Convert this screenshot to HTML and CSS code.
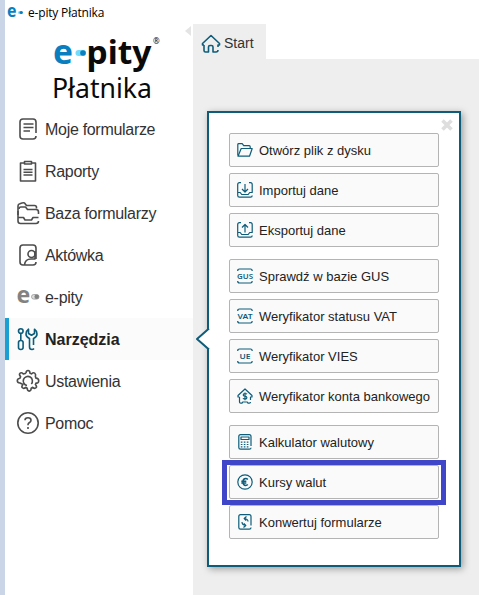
FILE: index.html
```html
<!DOCTYPE html>
<html lang="pl">
  <head>
    <meta charset="UTF-8" />
    <meta name="viewport" content="width=device-width, initial-scale=1.0" />
    <title>e-pity Płatnika</title>
    <link rel="stylesheet" href="styles.css">
  </head>

  <body>
    <div class="window">
      <header class="titlebar">
        <svg class="title-icon" width="17" height="16" viewBox="0 0 17 16">
          <text class="brand-e" x="0" y="13" font-size="18" textLength="9.500" lengthAdjust="spacingAndGlyphs">e</text>
          <rect x="11" y="7" width="5" height="3" rx="1.500" fill="#7fd8f7" />
          <circle cx="14.200" cy="8.500" r="1.600" fill="#0a7fc0" />
        </svg>
        <span class="title-text">e-pity Płatnika</span>
      </header>

      <aside class="sidebar">
        <i class="collapse"></i>
        <svg class="logo" width="110" height="70" viewBox="0 0 110 70">
          <text class="brand-e" x="0" y="32" font-size="34" textLength="20" lengthAdjust="spacingAndGlyphs">e</text>
          <rect x="22.500" y="18" width="10.500" height="6" rx="3" fill="#74dcfb" />
          <circle cx="30" cy="21" r="2.800" fill="#0a7fc0" />
          <text class="brand-name" x="33.500" y="32" font-size="33" textLength="65" lengthAdjust="spacingAndGlyphs">pity</text>
          <text class="brand-reg" x="100" y="12" font-size="8">®</text>
          <text class="brand-sub" x="-1" y="66" font-size="26.500" textLength="100" lengthAdjust="spacingAndGlyphs">Płatnika</text>
        </svg>

        <nav class="menu">
          <a class="item">
            <svg width="24" height="24" viewBox="0 0 24 24">
              <path d="M20 16V5q0-3-3-3H7Q4 2 4 5v14q0 3 3 3h10q3 0 3-3" />
              <path d="M7.500 7h10M7.500 10.500h10M7.500 14h6.500" />
            </svg>
            Moje formularze
          </a>
          <a class="item">
            <svg width="24" height="24" viewBox="0 0 24 24">
              <path d="M8 4H4.500v18h15V4H16" />
              <path d="M8.500 2.500h7v2.500h-7z" />
              <path d="M7.500 10.500h9M7.500 13.200h9M7.500 16h9" />
            </svg>
            Raporty
          </a>
          <a class="item">
            <svg width="24" height="24" viewBox="0 0 24 24">
              <path d="M2 14V5q0-2 1.800-2.300Q7 1.500 8.500 1.900L10.500 4.500h8q2 0 2 2v1" />
              <path d="M3 8q0-2 2-2h4.500L11.500 8.500H20q2.500 0 2.500 2.500v2" />
              <path d="M2 10v10q0 2.500 2.500 2.500h15.500q2.500 0 2.500-2.500M2 16.500h5.500l1.500 2.500h6.500l1.500-2.500h5.500" />
            </svg>
            Baza formularzy
          </a>
          <a class="item">
            <svg width="24" height="24" viewBox="0 0 24 24">
              <path d="M20 16V5q0-3-3-3H7Q4 2 4 5v14q0 3 3 3h10q3 0 3-3" />
              <circle cx="15.500" cy="11" r="3.500" />
              <path d="M19 8v8h-4q-6 0-6.500 6" />
            </svg>
            Aktówka
          </a>
          <a class="item">
            <svg width="24" height="24" viewBox="0 0 24 24">
              <text class="grey-e" x=".500" y="18" font-size="23" textLength="13.500" lengthAdjust="spacingAndGlyphs">e</text>
              <rect class="grey-pill" x="15.500" y="9.500" width="7.500" height="4.600" rx="2.300" />
              <circle class="grey-dot" cx="20.700" cy="11.800" r="2.300" />
            </svg>
            e-pity
          </a>
          <a class="item active">
            <svg width="24" height="24" viewBox="0 0 24 24">
              <circle cx="4.800" cy="4" r="2.300" />
              <path d="M4.800 6.500v7M2.500 15.500q0-2 2.300-2t2.300 2v5q0 2-2.300 2t-2.300-2z" />
              <path d="M18 21.500q-.8 1-2 1-2.500 0-2.500-2.500v-8.500Q10 10 10 7q0-3 2.500-4.800V6.500l3 1.700 3-1.700V2.200Q21 4 21 7q0 3-3.500 4.500V18" />
            </svg>
            Narzędzia
          </a>
          <a class="item">
            <svg width="24" height="24" viewBox="0 0 24 24">
              <path d="M10 4.200Q10 1.500 12 1.500t2 2.700l1.500.7q2-1.900 3.300-.6t.6 3.300l.6 1.500q2.700 0 2.700 2.700t-2.700 2.200l-.6 1.500q1.900 2 .6 3.300t-3.300-.5l-1.500.8q0 3-2 3t-2-3l-1.500-.8q-2 1.800-3.300.5t.6-3.300L4 14Q1.300 14 1.300 11.800T4 9.200l.6-1.600Q2.700 5.600 4 4.300t3.300.6L10 4.200" />
              <path d="M11 16.500A4.600 4.600 0 1 1 15.300 15" />
            </svg>
            Ustawienia
          </a>
          <a class="item">
            <svg width="24" height="24" viewBox="0 0 24 24">
              <circle cx="12" cy="12" r="10.200" />
              <path d="M9 9.200Q9 6.700 12 6.700t3 2.500q0 1.400-1.500 2.300T12 13.800v.5M12 16v2" />
            </svg>
            Pomoc
          </a>
        </nav>
      </aside>

      <main class="content">
        <div class="tab">
          <svg width="20" height="20" viewBox="0 0 20 20">
            <path d="M3 11H1.500v-1.500L10 1.500l8.500 8V11H17v2M3 11v5.500Q3 18 4.500 18h3v-5q0-1.500 1.500-1.500h1.500q1.500 0 1.500 1.500v5h3q2 0 2-2" />
          </svg>
          Start
        </div>

        <section class="popup">
          <svg class="arrow" width="14" height="22" viewBox="0 0 14 22">
            <path d="M14 .500L2 11l12 10.500" />
          </svg>
          <svg class="close" width="12" height="12" viewBox="0 0 12 12">
            <path d="M1.500 1.500l9 9M10.500 1.500l-9 9" />
          </svg>

          <div class="group">
            <button class="tool">
              <svg width="16" height="16" viewBox="0 0 16 16">
                <path d="M.800 13.500V2.500q0-.8 1-.8h3.400l1.500 2h5.500q1 0 1 1V6" />
                <path d="M1 14.200L4.200 6.500h11L12.500 14.200z" />
              </svg>
              Otwórz plik z dysku
            </button>
            <button class="tool">
              <svg width="16" height="16" viewBox="0 0 16 16">
                <path d="M4 .700H2.500Q.700.700.700 2.500v8h2.500l1.500 2h6.500l1.500-2h2.500v-8Q15.200.700 13.500.700H12M.700 10v3.500q0 1.700 1.800 1.700h11q1.700 0 1.700-1.700" />
                <path d="M8 2v7.500M5 7l3 3 3-3" />
              </svg>
              Importuj dane
            </button>
            <button class="tool">
              <svg width="16" height="16" viewBox="0 0 16 16">
                <path d="M4 .700H2.500Q.700.700.700 2.500v8h2.500l1.500 2h6.500l1.500-2h2.500v-8Q15.200.700 13.500.700H12M.700 10v3.500q0 1.700 1.800 1.700h11q1.700 0 1.700-1.700" />
                <path d="M8 10.500V3M5 5.500l3-3 3 3" />
              </svg>
              Eksportuj dane
            </button>
          </div>

          <div class="group">
            <button class="tool">
              <svg width="16" height="16" viewBox="0 0 16 16">
                <path d="M.700 3Q.700 1 2.500 1h11q1.700 0 1.700 2M.700 13q0 2 1.800 2h11q1.700 0 1.700-2" />
                <text x="0" y="10.700" textLength="16" lengthAdjust="spacingAndGlyphs">GUS</text>
              </svg>
              Sprawdź w bazie GUS
            </button>
            <button class="tool">
              <svg width="16" height="16" viewBox="0 0 16 16">
                <path d="M.700 3Q.700 1 2.500 1h11q1.700 0 1.700 2M.700 13q0 2 1.800 2h11q1.700 0 1.700-2" />
                <text x=".500" y="10.700" textLength="15" lengthAdjust="spacingAndGlyphs">VAT</text>
              </svg>
              Weryfikator statusu VAT
            </button>
            <button class="tool">
              <svg width="16" height="16" viewBox="0 0 16 16">
                <path d="M.700 3Q.700 1 2.500 1h11q1.700 0 1.700 2M.700 13q0 2 1.800 2h11q1.700 0 1.700-2" />
                <text x="2.500" y="10.700" textLength="11" lengthAdjust="spacingAndGlyphs">UE</text>
              </svg>
              Weryfikator VIES
            </button>
            <button class="tool">
              <svg width="16" height="16" viewBox="0 0 16 16">
                <path d="M2.500 9H1V7.500L8 1l7 6.500V9h-1.500v3M2.500 9v5q0 1.200 1.200 1.200H5l.7-1.200h4.600l.7 1.200h1.300q1.200 0 1.200-1.200" />
                <path d="M10 6.200Q9.500 5.500 8 5.500q-1.800 0-1.800 1.400Q6.200 8 8 8.200t1.900 1.500Q9.900 11 8 11q-1.600 0-2-.8M8 4.500v7.700" />
              </svg>
              Weryfikator konta bankowego
            </button>
          </div>

          <div class="group">
            <button class="tool">
              <svg width="16" height="16" viewBox="0 0 16 16">
                <path d="M14 12V2.500Q14 .700 12.300.700H3.500Q1.800.700 1.800 2.500v11q0 1.700 1.700 1.700h8.800q1.700 0 1.700-1.500M4 3h8v2.500H4z" />
                <path class="keys" d="M3.800 8.200h8.600M3.800 10.500h8.600M3.800 12.800h8.600" />
              </svg>
              Kalkulator walutowy
            </button>
            <button class="tool marked">
              <svg width="16" height="16" viewBox="0 0 16 16">
                <circle cx="8" cy="8" r="7.200" />
                <path class="bold" d="M10.800 5.500Q10 4.600 8.700 4.600 6 4.600 6 8t2.700 3.400q1.300 0 2.100-.9M4.300 7.200h5M4.300 9h5" />
              </svg>
              Kursy walut
            </button>
            <button class="tool">
              <svg width="16" height="16" viewBox="0 0 16 16">
                <path d="M14 11.500V2.500Q14 .700 12.300.700H3.500Q1.800.700 1.800 2.500v11q0 1.700 1.700 1.700h8.800q1.700 0 1.700-1.700" />
                <path d="M11 7.500Q11 5 7.500 4.500M9.500 2.500l-2.300 2 2 2.200M5 8q0 3 3.500 3.500M6.500 13.500l2.300-2-2-2.200" />
              </svg>
              Konwertuj formularze
            </button>
          </div>
        </section>
      </main>
    </div>
  </body>
</html>
```

FILE: styles.css
```css
* {
  margin: 0;
  padding: 0;
  box-sizing: border-box;
}

body {
  background: #fff;
  font-family: "Liberation Sans", Arial, sans-serif;
  color: #333;
  overflow: hidden;
}

svg {
  flex: none;
  overflow: visible;
  fill: none;
  stroke: #4d4d4d;
  stroke-width: 1.6;
  stroke-linejoin: round;
}
svg text {
  stroke: none;
  font-family: "Noto Sans", sans-serif;
  font-weight: 700;
}

.window {
  display: grid;
  grid-template-columns: 188px 1fr;
  grid-template-rows: 24px 1fr;
  height: 595px;
  border-left: 5px solid #cad5e7;
}

/* title bar */
.titlebar {
  grid-column: 1 / 3;
  display: flex;
  align-items: center;
  padding-left: 2px;
}
.title-icon,
.logo {
  stroke: none;
}
.title-icon {
  margin: -1px 4px 0 0;
}
.title-text {
  font-family: "Open Sans", sans-serif;
  font-size: 12px;
  letter-spacing: -0.18px;
  color: #000;
}
.brand-e {
  fill: #0a7fc0;
}
.brand-name {
  fill: #0a0a0a;
}
svg .brand-sub,
svg .brand-reg {
  fill: #0a0a0a;
  font-weight: 400;
}

/* left menu */
.sidebar {
  position: relative;
}
.collapse {
  position: absolute;
  right: 2px;
  top: 2px;
  border: 5px solid transparent;
  border-left: 0;
  border-right: 6px solid #e4e4e4;
}
.logo {
  display: block;
  margin: 8px 0 0 48px;
}
.menu {
  margin-top: 6px;
}
.item {
  display: flex;
  align-items: center;
  gap: 5px;
  height: 42px;
  padding: 2px 0 0 11px;
  font-size: 16px;
  letter-spacing: -0.3px;
}
.item svg {
  margin-bottom: 2px;
}
.item.active {
  padding-left: 7px;
  border-left: 4px solid #1a9fd3;
  background: #fbfbfb;
  font-weight: 700;
  letter-spacing: 0;
  color: #222;
}
.item.active svg {
  stroke: #0d5c7a;
}
.item .grey-e,
.item .grey-dot {
  fill: #828282;
  stroke: none;
}
.item .grey-pill {
  fill: #ddd;
  stroke: #999;
  stroke-width: 0.8;
}

/* right side */
.content {
  background: linear-gradient(#fff, #fff) 73px 0 / 100% 35px no-repeat #eee;
}
.tab {
  display: flex;
  align-items: center;
  gap: 3px;
  width: 73px;
  height: 35px;
  padding: 3px 0 0 8px;
  font-size: 14px;
}
.tab svg {
  stroke: #0d5c7a;
  margin-top: 1px;
}

.popup {
  position: relative;
  display: flex;
  flex-direction: column;
  gap: 12px;
  width: 254px;
  height: 456px;
  margin: 52px 0 0 14px;
  padding: 20px;
  background: #fff;
  border: 2px solid #0d5c7a;
  box-shadow: 2px 2px 7px rgba(0, 0, 0, 0.35);
}
.popup svg {
  stroke: #0d5c7a;
  stroke-width: 1.2;
}
.popup .arrow {
  position: absolute;
  left: -14px;
  top: 215px;
  fill: #fff;
  stroke-width: 2;
}
.popup .close {
  position: absolute;
  right: 6px;
  top: 6px;
  stroke: #dedede;
  stroke-width: 3.6;
}
.group {
  display: flex;
  flex-direction: column;
  gap: 6px;
}
.tool {
  position: relative;
  display: flex;
  align-items: center;
  gap: 6px;
  height: 34px;
  padding-left: 7px;
  background: #fafafa;
  border: 1px solid #b4b4b4;
  border-radius: 2px;
  font-family: inherit;
  font-size: 13px;
  color: #222;
  white-space: nowrap;
}
.tool text {
  fill: #0d5c7a;
  font-size: 7.5px;
  font-weight: 600;
}
.tool .keys {
  stroke-dasharray: 1.6 1.4;
}
.tool .bold {
  stroke-width: 1.5;
}
/* frame around the chosen tool */
.marked::after {
  content: "";
  position: absolute;
  z-index: 1;
  inset: -6px -8px -7px;
  border: 5px solid #4046c8;
}
```
